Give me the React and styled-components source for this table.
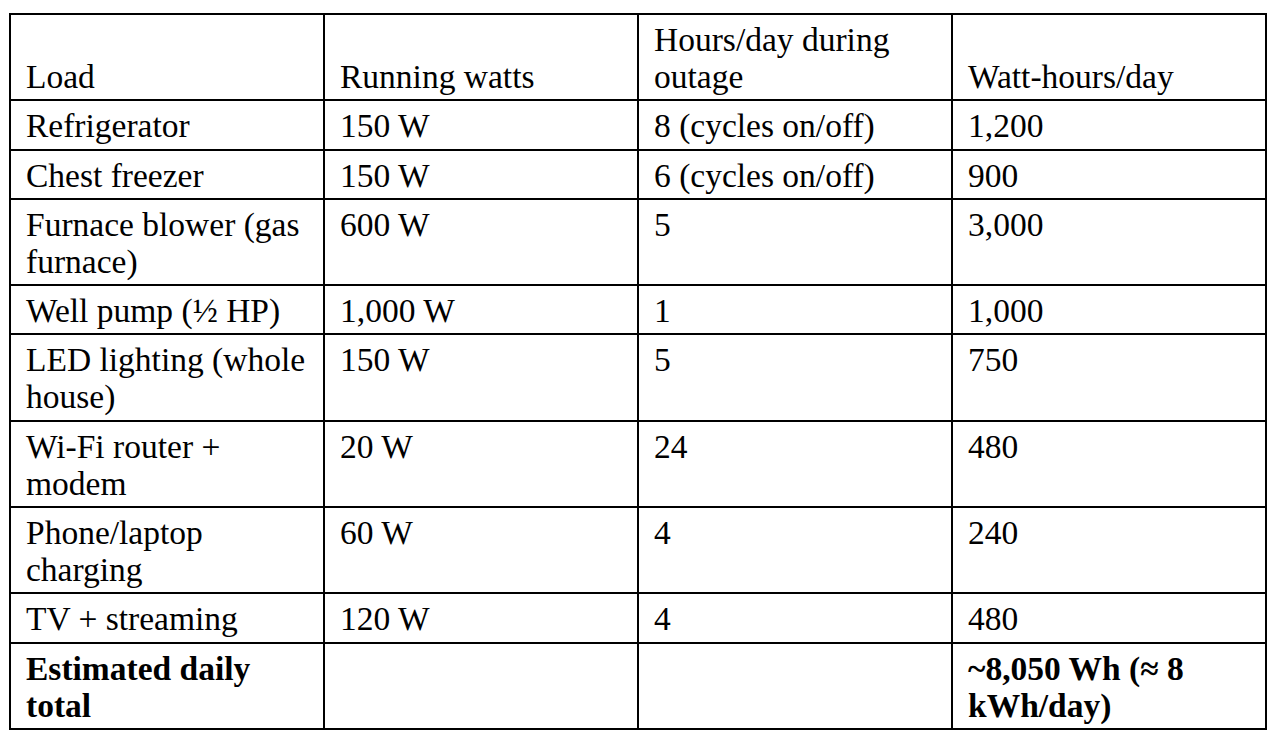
import styled, { createGlobalStyle } from 'styled-components';

const GlobalStyle = createGlobalStyle`
  html, body {
    margin: 0;
    padding: 0;
    background: #ffffff;
  }
  body {
    font-family: 'Liberation Serif', 'Times New Roman', serif;
    color: #000000;
  }
`;

const rows = [
  { load: 'Refrigerator', watts: '150 W', hours: '8 (cycles on/off)', wh: '1,200' },
  { load: 'Chest freezer', watts: '150 W', hours: '6 (cycles on/off)', wh: '900' },
  { load: 'Furnace blower (gas furnace)', watts: '600 W', hours: '5', wh: '3,000' },
  { load: 'Well pump (½ HP)', watts: '1,000 W', hours: '1', wh: '1,000' },
  { load: 'LED lighting (whole house)', watts: '150 W', hours: '5', wh: '750' },
  { load: 'Wi-Fi router + modem', watts: '20 W', hours: '24', wh: '480' },
  { load: 'Phone/laptop charging', watts: '60 W', hours: '4', wh: '240' },
  { load: 'TV + streaming', watts: '120 W', hours: '4', wh: '480' },
];

const App = () => {
  return (
    <Page>
      <GlobalStyle />
      <Table>
        <colgroup>
          <col />
          <col />
          <col />
          <col />
        </colgroup>
        <thead>
          <tr>
            <HeadCell>Load</HeadCell>
            <HeadCell>Running watts</HeadCell>
            <HeadCell>Hours/day during outage</HeadCell>
            <HeadCell>Watt-hours/day</HeadCell>
          </tr>
        </thead>
        <tbody>
          {rows.map(row => (
            <tr key={row.load}>
              <Cell>{row.load}</Cell>
              <Cell>{row.watts}</Cell>
              <Cell>{row.hours}</Cell>
              <Cell>{row.wh}</Cell>
            </tr>
          ))}
          <tr>
            <Cell bold>Estimated daily total</Cell>
            <Cell />
            <Cell />
            <Cell bold>~8,050 Wh (≈ 8 kWh/day)</Cell>
          </tr>
        </tbody>
      </Table>
    </Page>
  );
};

export default App;

const Page = styled.div`
  padding: 13px 0 0 9px;
  width: 1274px;
  height: 742px;
  box-sizing: border-box;
  overflow: hidden;
`;

const Table = styled.table`
  width: 1258px;
  table-layout: fixed;
  border-collapse: separate;
  border-spacing: 0;
  border-top: 2px solid #000;
  border-left: 2px solid #000;

  col {
    width: 25%;
  }
`;

const Cell = styled.td`
  border-right: 2px solid #000;
  border-bottom: 2px solid #000;
  padding: 6px 8px 4.3px 15px;
  font-size: 33.5px;
  line-height: 37px;
  font-weight: ${props => (props.bold ? 700 : 400)};
  vertical-align: top;
  text-align: left;
`;

const HeadCell = styled(Cell).attrs({ as: 'th' })`
  font-weight: 400;
  vertical-align: bottom;
  height: 74px;
`;
